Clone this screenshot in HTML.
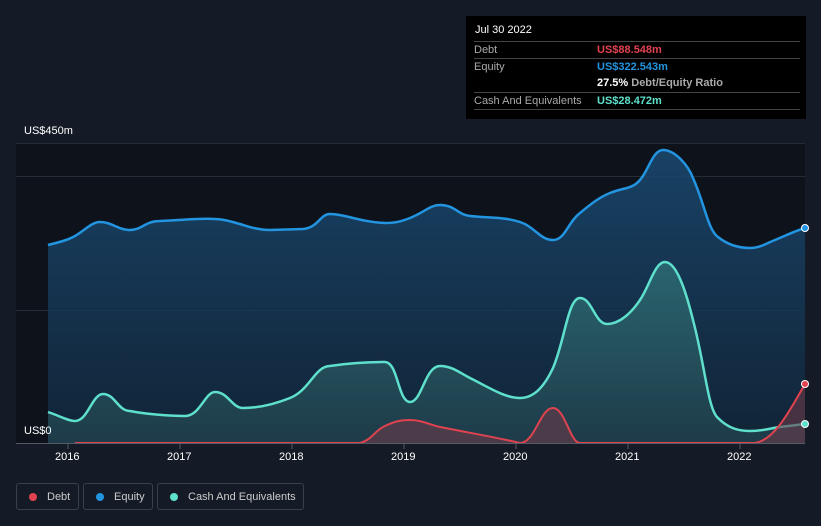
<!DOCTYPE html>
<html><head><style>
body{margin:0;width:821px;height:526px;background:#151b26;font-family:"Liberation Sans",sans-serif;overflow:hidden;position:relative}
.t{position:absolute;color:#fff;font-size:11px}
.tip{position:absolute;left:466px;top:16px;width:340px;height:103px;background:#000;font-size:11px}
.row{position:absolute;left:8px;width:326px;border-top:1px solid #444;height:17px;line-height:17px;color:#aaa}
.row span{position:absolute;left:123px;font-weight:bold}
.leg{position:absolute;top:483px;height:27px;border:1px solid #3a404b;border-radius:3px;color:#ccc;font-size:11px;line-height:27px;box-sizing:border-box}
.leg i{display:inline-block;width:8px;height:8px;border-radius:50%;margin:0 10px 0 12px;vertical-align:-1px}
</style></head><body>
<svg width="821" height="526" style="position:absolute;left:0;top:0">
<defs>
<linearGradient id="ge" x1="0" y1="0" x2="0" y2="1"><stop offset="0" stop-color="#1a4a72" stop-opacity=".85"/><stop offset="1" stop-color="#12283e" stop-opacity=".8"/></linearGradient>
<linearGradient id="gc" x1="0" y1="0" x2="0" y2="1"><stop offset="0" stop-color="#3a8a85" stop-opacity=".55"/><stop offset="1" stop-color="#264a55" stop-opacity=".6"/></linearGradient>
</defs>
<rect x="16" y="143" width="789" height="300" fill="#0e131b"/>
<g stroke="#262c36" stroke-width="1"><line x1="16" y1="143.5" x2="805" y2="143.5"/><line x1="16" y1="176.5" x2="805" y2="176.5"/><line x1="16" y1="310.5" x2="805" y2="310.5"/></g>
<path d="M48,245 C60,242 68,240 75,236 C85,230 92,222 100,222 C112,222 118,230 130,230 C142,230 145,221 160,221 C185,220 200,218 215,219 C225,219 232,222 240,224 C250,227 258,230 270,230 L303,229 C318,228 320,214 330,214 C345,214 360,222 385,223 C397,223 402,221 410,218 C425,212 430,205 440,205 C455,205 458,215 470,216 C490,218 505,217 520,222 C535,227 540,240 553,240 C565,240 568,222 580,213 C592,203 600,197 610,193 C622,188 630,189 637,183 C648,174 652,150 663,150 C675,150 688,165 693,178 C705,205 708,230 718,237 C728,245 738,248 750,248 C760,248 765,244 775,240 C787,235 795,231 805,228 L805,443 L48,443Z" fill="url(#ge)"/>
<path d="M48,245 C60,242 68,240 75,236 C85,230 92,222 100,222 C112,222 118,230 130,230 C142,230 145,221 160,221 C185,220 200,218 215,219 C225,219 232,222 240,224 C250,227 258,230 270,230 L303,229 C318,228 320,214 330,214 C345,214 360,222 385,223 C397,223 402,221 410,218 C425,212 430,205 440,205 C455,205 458,215 470,216 C490,218 505,217 520,222 C535,227 540,240 553,240 C565,240 568,222 580,213 C592,203 600,197 610,193 C622,188 630,189 637,183 C648,174 652,150 663,150 C675,150 688,165 693,178 C705,205 708,230 718,237 C728,245 738,248 750,248 C760,248 765,244 775,240 C787,235 795,231 805,228" fill="none" stroke="#2394e0" stroke-width="2.5"/>
<path d="M48,412 C60,416 68,421 75,421 C88,421 92,394 103,394 C115,394 118,411 130,411 C145,414 170,416 185,416 C200,416 205,392 215,392 C228,392 232,408 243,408 C260,408 275,404 290,398 C310,390 315,366 330,366 C350,363 370,362 385,362 C398,362 398,402 410,402 C422,402 425,366 440,366 C452,366 460,373 470,378 C490,388 505,398 520,398 C535,398 545,385 553,368 C565,340 568,298 580,298 C592,298 595,324 607,324 C620,324 632,312 640,300 C650,285 655,262 665,262 C678,262 688,300 693,320 C705,365 708,410 718,418 C728,428 738,431 750,431 C765,431 770,428 780,427 L805,424 L805,443 L48,443Z" fill="url(#gc)"/>
<path d="M48,412 C60,416 68,421 75,421 C88,421 92,394 103,394 C115,394 118,411 130,411 C145,414 170,416 185,416 C200,416 205,392 215,392 C228,392 232,408 243,408 C260,408 275,404 290,398 C310,390 315,366 330,366 C350,363 370,362 385,362 C398,362 398,402 410,402 C422,402 425,366 440,366 C452,366 460,373 470,378 C490,388 505,398 520,398 C535,398 545,385 553,368 C565,340 568,298 580,298 C592,298 595,324 607,324 C620,324 632,312 640,300 C650,285 655,262 665,262 C678,262 688,300 693,320 C705,365 708,410 718,418 C728,428 738,431 750,431 C765,431 770,428 780,427 L805,424" fill="none" stroke="#5ee0cc" stroke-width="2.5"/>
<path d="M75,443 L360,443 C372,440 375,430 385,426 C395,421 402,420 410,420 C422,420 430,425 440,427 C470,433 500,438 520,443 C535,443 540,408 553,408 C565,408 570,443 580,443 L755,443 C775,440 790,410 805,384 L805,443 L75,443Z" fill="#6a3a48" fill-opacity=".6"/>
<path d="M75,443 L360,443 C372,440 375,430 385,426 C395,421 402,420 410,420 C422,420 430,425 440,427 C470,433 500,438 520,443 C535,443 540,408 553,408 C565,408 570,443 580,443 L755,443 C775,440 790,410 805,384" fill="none" stroke="#e0434f" stroke-width="2"/>
<line x1="16" y1="443.5" x2="805" y2="443.5" stroke="#555b66"/>
<g stroke="#555b66"><line x1="68" y1="444" x2="68" y2="449"/><line x1="180" y1="444" x2="180" y2="449"/><line x1="292" y1="444" x2="292" y2="449"/><line x1="404" y1="444" x2="404" y2="449"/><line x1="516" y1="444" x2="516" y2="449"/><line x1="628" y1="444" x2="628" y2="449"/><line x1="740" y1="444" x2="740" y2="449"/></g>
<circle cx="805" cy="228" r="3.5" fill="#2394e0" stroke="#fff" stroke-width="1"/>
<circle cx="805" cy="384" r="3.5" fill="#e0434f" stroke="#fff" stroke-width="1"/>
<circle cx="805" cy="424" r="3.5" fill="#5ee0cc" stroke="#fff" stroke-width="1"/>
</svg>
<div class="t" style="left:24px;top:125px">US$450m</div>
<div class="t" style="left:24px;top:425px">US$0</div>
<div class="t" style="left:55px;top:451px">2016</div>
<div class="t" style="left:167px;top:451px">2017</div>
<div class="t" style="left:279px;top:451px">2018</div>
<div class="t" style="left:391px;top:451px">2019</div>
<div class="t" style="left:503px;top:451px">2020</div>
<div class="t" style="left:615px;top:451px">2021</div>
<div class="t" style="left:727px;top:451px">2022</div>
<div class="tip">
<div style="position:absolute;left:9px;top:8px;color:#fff">Jul 30 2022</div>
<div class="row" style="top:25px">Debt<span style="color:#e0434f">US$88.548m</span></div>
<div class="row" style="top:42px">Equity<span style="color:#2394e0">US$322.543m</span></div>
<div class="row" style="top:59px;border-top:none"><span style="color:#fff">27.5% <b style="color:#aaa">Debt/Equity Ratio</b></span></div>
<div class="row" style="top:76px">Cash And Equivalents<span style="color:#5ee0cc">US$28.472m</span></div>
<div class="row" style="top:93px;height:0"></div>
</div>
<div class="leg" style="left:16px;width:63px"><i style="background:#e0434f"></i>Debt</div>
<div class="leg" style="left:83px;width:70px"><i style="background:#2394e0"></i>Equity</div>
<div class="leg" style="left:157px;width:147px"><i style="background:#5ee0cc"></i>Cash And Equivalents</div>
</body></html>
